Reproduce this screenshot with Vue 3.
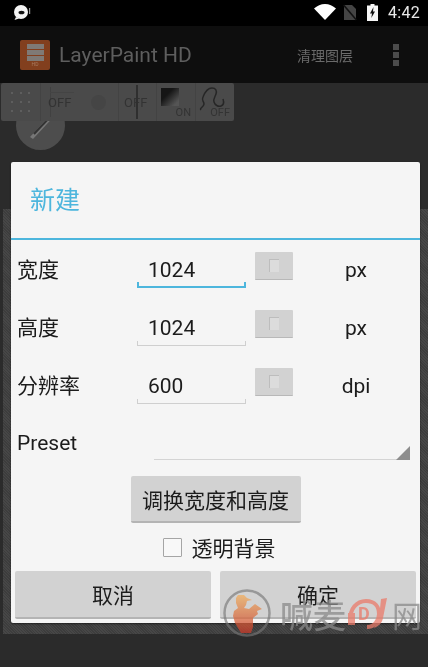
<template>
  <div class="screen">
    <div class="statusbar">
      <svg class="notif" width="20" height="18" viewBox="0 0 20 18">
        <circle cx="8" cy="9" r="7" fill="#f4f4f4" />
        <path d="M3 14l-1.500 3 4.500-1.500z" fill="#f4f4f4" />
        <ellipse cx="8.500" cy="9.500" rx="3" ry="1.800" fill="#111" />
        <rect x="16" y="5" width="1.200" height="6" fill="#999" />
      </svg>
      <span class="spacer"></span>
      <svg width="22" height="16" viewBox="0 0 22 16">
        <path d="M0 4.500C3 1.800 7 0 11 0s8 1.800 11 4.500L11 16z" fill="#fff" />
      </svg>
      <svg class="sim" width="14" height="17" viewBox="0 0 14 17">
        <path d="M1 1h8l4 4v11H1z" fill="#444" />
        <path d="M0 1.500L1.200 .5 14 15.500 12.800 16.500z" fill="#111" />
      </svg>
      <svg class="battery" width="11" height="17" viewBox="0 0 11 17">
        <path d="M3.500 0h4v1.500H11V17H0V1.500h3.500z" fill="#f6f6f6" />
        <path d="M6.500 3L3 9.500h2L4.300 14 8 7.500H6z" fill="#111" />
      </svg>
      <span class="time">4:42</span>
    </div>

    <div class="appbar">
      <div class="applogo">
        <span class="layers"><i></i><i></i><i></i></span>
        <span class="hd">HD</span>
      </div>
      <span class="appname">LayerPaint HD</span>
      <span class="spacer"></span>
      <span class="action">清理图层</span>
      <div class="overflow"><i></i><i></i><i></i></div>
    </div>

    <div class="canvas">
      <div class="brushknob">
        <svg width="30" height="26" viewBox="0 0 30 26">
          <path d="M4 24L24 2l3 2.500L7 26z" fill="#777" />
          <path d="M8 21L24 4" stroke="#333" stroke-width="2" />
        </svg>
      </div>

      <div class="toolbar">
        <div class="tool dots">
          <i v-for="n in 9" :key="n"></i>
        </div>
        <div class="tool wide-off">
          <span class="hair-v"></span>
          <span class="hair-h"></span>
          <span class="off-label">OFF</span>
          <span class="dot"></span>
        </div>
        <div class="tool split-off">
          <span class="off-label">OFF</span>
          <span class="split-line"></span>
        </div>
        <div class="tool gradient">
          <span class="swatch"></span>
          <span class="corner-label">ON</span>
        </div>
        <div class="tool curve">
          <svg width="32" height="30" viewBox="0 0 32 30">
            <path d="M5 27c-2-2 3-3 3-6s-3-3-1-7c2-5 5-9 9-9s5 3 4 6-3 5-2 8c1 3 4 5 7 4 3-1 3-4 2-7" fill="none" stroke="#262626" stroke-width="1.500" />
          </svg>
          <span class="corner-label">OFF</span>
        </div>
      </div>

      <div class="backdrop"></div>

      <div class="dialog">
        <div class="dialog-title">新建</div>
        <div class="dialog-line"></div>

        <div v-for="(row, i) in rows" :key="row.label" class="row">
          <span class="row-label">{{ row.label }}</span>
          <span class="field" :class="{ focused: i === 0 }">{{ row.value }}</span>
          <span class="mini-btn"><i></i></span>
          <span class="unit">{{ row.unit }}</span>
        </div>

        <div class="preset">
          <span class="row-label">Preset</span>
          <span class="spinner"></span>
        </div>

        <div class="swap-wrap">
          <button class="btn swap">调换宽度和高度</button>
        </div>

        <label class="check-row">
          <span class="box"></span>
          <span>透明背景</span>
        </label>

        <div class="actions">
          <button class="btn">取消</button>
          <button class="btn">确定</button>
        </div>
      </div>

      <div class="watermark">
        <svg width="50" height="50" viewBox="0 0 50 50">
          <defs>
            <linearGradient id="mark" x1="0" y1="0" x2="0" y2="1">
              <stop offset="0" stop-color="#f0b060" />
              <stop offset="1" stop-color="#c83a2a" />
            </linearGradient>
          </defs>
          <circle cx="25" cy="24" r="22.500" fill="none" stroke="#777" stroke-width="2.500" opacity=".85" />
          <path d="M14 9L16 6h6l3 3 5 2-5 1-1 4-2 3 5 1 6-5 7 5-5 2 1 3-5 4v9l-2 6H19l-6-10-2-7 1-5 4-3-2-5z" fill="url(#mark)" />
        </svg>
        <span class="wm-text">喊麦</span>
        <span class="wm-dj">
          <svg width="41" height="32" viewBox="0 0 41 32">
            <path d="M4 22C2 11 10 3 19 3s13 6 13 13-5 13-12 13" fill="none" stroke="#ea7b6a" stroke-width="4" />
            <path d="M1 15h7v12H1z" fill="#ea7b6a" />
            <path d="M34 1l6-1-4 20c-1 5-4 8-9 10l2-4c2-1 3-3 3-6z" fill="#ea7b6a" />
          </svg>
          <span class="wm-d">D</span>
        </span>
        <span class="wm-text small">网</span>
      </div>
    </div>
  </div>
</template>

<script setup>
const rows = [
  { label: "宽度", value: "1024", unit: "px" },
  { label: "高度", value: "1024", unit: "px" },
  { label: "分辨率", value: "600", unit: "dpi" },
];
</script>

<style>
html,
body {
  margin: 0;
  background: #2b2b2b;
}
</style>

<style scoped>
.screen {
  width: 428px;
  height: 667px;
  overflow: hidden;
  display: flex;
  flex-direction: column;
  background: #2b2b2b;
  font-family: Roboto, "Noto Sans CJK SC", sans-serif;
  filter: blur(0.5px);
}

.spacer {
  flex: 1;
}

.statusbar {
  height: 26px;
  flex: none;
  background: #000;
  display: flex;
  align-items: center;
  padding: 0 8px 2px 13px;
  box-sizing: border-box;
}

.sim {
  margin-left: 7px;
}

.battery {
  margin-left: 10px;
}

.time {
  margin-left: 10px;
  color: #e8e8e8;
  font-size: 16px;
  letter-spacing: 0.3px;
}

.appbar {
  height: 57px;
  flex: none;
  background: #0e0e0e;
  display: flex;
  align-items: center;
  padding: 0 29px 0 20px;
  box-sizing: border-box;
}

.applogo {
  width: 30px;
  height: 30px;
  border-radius: 2px;
  background: #823f1e;
  display: flex;
  flex-direction: column;
  align-items: center;
  padding-top: 4px;
  box-sizing: border-box;
}

.layers {
  display: flex;
  flex-direction: column;
  gap: 1px;
}

.layers i {
  display: block;
  width: 17px;
  height: 5px;
  background: #7f7a76;
}

.hd {
  color: #a87c62;
  font-size: 5px;
  line-height: 7px;
}

.appname {
  margin-left: 9px;
  color: #5e5e5e;
  font-size: 21px;
}

.action {
  color: #6a6a6a;
  font-size: 14px;
  margin-right: 40px;
}

.overflow {
  display: flex;
  flex-direction: column;
  gap: 2px;
}

.overflow i {
  display: block;
  width: 6px;
  height: 6px;
  background: #4c4c4c;
}

.canvas {
  position: relative;
  flex: 1;
}

.toolbar {
  position: absolute;
  left: 1px;
  top: 0;
  width: 233px;
  height: 38px;
  border-radius: 2px;
  background: #4a4a4a;
  display: flex;
}

.tool {
  position: relative;
  height: 100%;
  box-sizing: border-box;
  border-right: 1px solid #434343;
}

.dots {
  width: 40px;
  display: grid;
  grid-template-columns: repeat(3, 2px);
  grid-template-rows: repeat(3, 2px);
  justify-content: space-evenly;
  align-content: space-evenly;
  padding: 2px 3px;
}

.dots i {
  background: #666;
  border-radius: 50%;
}

.wide-off {
  width: 78px;
}

.hair-v {
  position: absolute;
  left: 9px;
  top: 4px;
  bottom: 4px;
  width: 1px;
  background: #414141;
}

.hair-h {
  position: absolute;
  left: 9px;
  top: 9px;
  width: 24px;
  height: 1px;
  background: #444;
}

.off-label {
  position: absolute;
  top: 12px;
  left: 7px;
  color: #333;
  font-size: 13px;
  line-height: 15px;
}

.dot {
  position: absolute;
  left: 50px;
  top: 12px;
  width: 15px;
  height: 15px;
  border-radius: 50%;
  background: #454545;
}

.split-off {
  width: 38px;
}

.split-off .off-label {
  left: 5px;
}

.split-line {
  position: absolute;
  left: 17px;
  top: 2px;
  bottom: 2px;
  width: 2px;
  background: #2f2f2f;
}

.gradient {
  width: 39px;
}

.swatch {
  position: absolute;
  left: 4px;
  top: 5px;
  width: 18px;
  height: 18px;
  background: linear-gradient(135deg, #151515 35%, #555 85%);
}

.corner-label {
  position: absolute;
  right: 4px;
  bottom: 2px;
  color: #333;
  font-size: 11px;
  line-height: 13px;
}

.curve {
  flex: 1;
  border-right: 0;
}

.curve svg {
  position: absolute;
  left: 0;
  top: 0;
}

.brushknob {
  position: absolute;
  left: 16px;
  top: 18px;
  width: 49px;
  height: 49px;
  border-radius: 50%;
  background: #4d4d4d;
  display: flex;
  align-items: center;
  justify-content: center;
}

.backdrop {
  position: absolute;
  left: 3px;
  right: 0;
  top: 126px;
  height: 425px;
  background: repeating-linear-gradient(45deg, #474747 0 1px, #3d3d3d 1px 2px);
}

.dialog {
  position: absolute;
  left: 11px;
  top: 79px;
  width: 409px;
  height: 461px;
  background: #f5f5f5;
  border-radius: 2px;
  box-shadow: 0 1px 2px rgba(0, 0, 0, 0.5);
  color: #1c1c1c;
  font-size: 21px;
}

.dialog-title {
  height: 76px;
  line-height: 78px;
  padding-left: 19px;
  color: #4db6dd;
  font-size: 25px;
}

.dialog-line {
  height: 2px;
  background: #4db6dd;
}

.row {
  height: 58px;
  display: flex;
  align-items: flex-start;
  padding-left: 6px;
}

.row-label {
  line-height: 24px;
}

.row .row-label {
  width: 120px;
  margin-top: 18px;
}

.field {
  position: relative;
  width: 109px;
  height: 34px;
  margin-top: 14px;
  padding-left: 11px;
  box-sizing: border-box;
  font-size: 21px;
  line-height: 32px;
  border-bottom: 1px solid #cfcfcf;
}

.field::before,
.field::after {
  content: "";
  position: absolute;
  bottom: 0;
  width: 1px;
  height: 4px;
  background: #cfcfcf;
}

.field::before {
  left: 0;
}

.field::after {
  right: 0;
}

.field.focused {
  border-bottom: 2px solid #4db6dd;
}

.field.focused::before,
.field.focused::after {
  background: #4db6dd;
  width: 2px;
}

.mini-btn {
  width: 38px;
  height: 28px;
  margin-top: 12px;
  margin-left: 9px;
  background: #d2d2d2;
  border-bottom: 1px solid #b8b8b8;
  box-sizing: border-box;
  border-radius: 1px;
  display: flex;
  align-items: center;
  justify-content: center;
}

.mini-btn i {
  width: 9px;
  height: 12px;
  background: #dcdcdc;
  border-top: 1px solid #bdbdbd;
  border-left: 1px solid #bdbdbd;
}

.unit {
  width: 126px;
  margin-top: 16px;
  text-align: center;
  font-size: 21px;
  line-height: 28px;
}

.preset {
  height: 58px;
  position: relative;
  padding-left: 6px;
  box-sizing: border-box;
  padding-top: 17px;
}

.spinner {
  position: absolute;
  left: 143px;
  right: 10px;
  top: 45px;
  height: 1px;
  background: #d4d4d4;
}

.spinner::after {
  content: "";
  position: absolute;
  right: 0;
  bottom: 0;
  width: 0;
  height: 0;
  border-left: 14px solid transparent;
  border-bottom: 14px solid #8e8e8e;
}

.swap-wrap {
  display: flex;
  justify-content: center;
  margin-top: 4px;
}

.btn {
  margin: 0;
  border: 0;
  border-bottom: 2px solid #b4b4b4;
  border-radius: 2px;
  background: #d2d2d2;
  color: #1c1c1c;
  font-family: inherit;
  font-size: 21px;
  padding: 0;
  height: 48px;
}

.swap {
  width: 170px;
  height: 47px;
}

.check-row {
  height: 48px;
  display: flex;
  align-items: center;
  justify-content: center;
  gap: 10px;
  padding-left: 7px;
}

.box {
  width: 19px;
  height: 19px;
  box-sizing: border-box;
  border: 1px solid #a5a5a5;
  border-radius: 1px;
  background: #f8f8f8;
}

.actions {
  display: grid;
  grid-template-columns: 196px 196px;
  gap: 9px;
  padding-left: 4px;
}

.watermark {
  position: absolute;
  left: 222px;
  top: 506px;
  display: flex;
  align-items: center;
  opacity: 0.75;
  pointer-events: none;
}

.wm-text {
  margin-left: 8px;
  color: #8a8a8a;
  font-size: 33px;
  font-weight: 500;
}

.wm-text.small {
  font-size: 30px;
  font-weight: 400;
  margin-left: 4px;
}

.wm-dj {
  position: relative;
  width: 41px;
  height: 32px;
  margin-left: 1px;
}

.wm-d {
  position: absolute;
  left: 11px;
  top: 6px;
  color: #ea7b6a;
  font-size: 18px;
  line-height: 20px;
  font-weight: 700;
}
</style>
